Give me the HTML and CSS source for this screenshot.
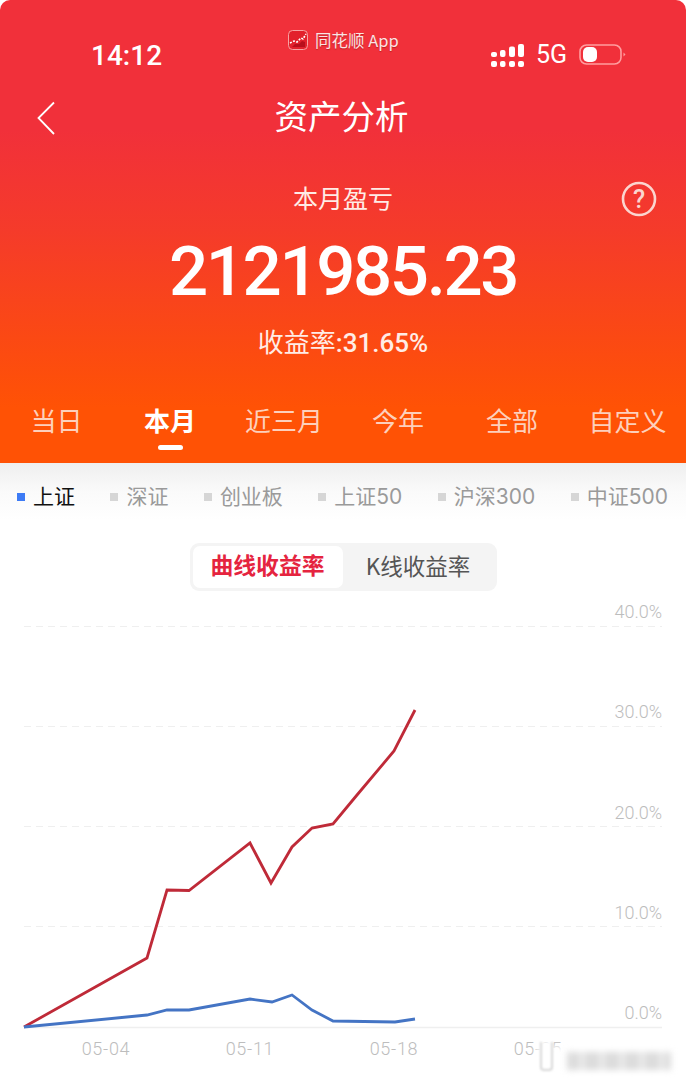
FILE: index.html
```html
<!DOCTYPE html>
<html lang="zh">
<head>
<meta charset="utf-8">
<title>资产分析</title>
<link rel="stylesheet" href="styles.css">
</head>
<body>
<div class="page">
  <header class="hero">
    <div class="status">
      <span class="time">14:12</span>
      <span class="carrier">
        <svg class="app-icon" width="20" height="20" viewBox="0 0 20 20"><rect x=".5" y=".5" width="19" height="19" rx="4" fill="#e2212c" stroke="#f7a3a3"/><path d="M2 13l4-2 3 1 4-4 2 1 3-5" fill="none" stroke="#fff" stroke-width="1.6" stroke-dasharray="2 1.4"/><path d="M4 17l3-3 4 0 3-3 3 1v5z" fill="#b80f1c"/></svg>
        同花顺 App
      </span>
      <span class="indicators">
        <svg width="33" height="23" viewBox="0 0 33 23" fill="#fff"><rect x="0" y="8" width="6" height="5" rx="2"/><rect x="0" y="17" width="6" height="6" rx="2"/><rect x="9" y="6" width="5.500" height="7" rx="2"/><rect x="9" y="17" width="5.500" height="6" rx="2"/><rect x="18" y="2.500" width="6" height="10.500" rx="2"/><rect x="18" y="17" width="6" height="6" rx="2"/><rect x="27" y="0" width="6" height="13" rx="2"/><rect x="27" y="17" width="6" height="6" rx="2"/></svg>
        <span class="net">5G</span>
        <svg width="47" height="22" viewBox="0 0 47 22"><rect x="1" y="1" width="41" height="19" rx="6.500" fill="none" stroke="#ff9d9f" stroke-width="1.600"/><rect x="4" y="3" width="14" height="15" rx="5" fill="#fff"/><path d="M44.500 8.500l2 2-2 2z" fill="#ff9d9f"/></svg>
      </span>
    </div>
    <div class="nav">
      <svg class="back" width="20" height="34" viewBox="0 0 20 34"><path d="M18 1.500L2.500 17 18 33" fill="none" stroke="#fff" stroke-width="1.800"/></svg>
      <h1 class="title">资产分析</h1>
    </div>
    <div class="summary">
      <div class="summary-label">本月盈亏</div>
      <svg class="help" width="36" height="36" viewBox="0 0 36 36"><circle cx="18" cy="18" r="16" fill="none" stroke="#fbd5cf" stroke-width="2.600"/><text x="18" y="27" text-anchor="middle" class="help-mark">?</text></svg>
      <div class="amount">2121985.23</div>
      <div class="rate">收益率<span class="rate-num">:31.65%</span></div>
    </div>
    <nav class="tabs">
      <span class="tab">当日</span>
      <span class="tab active">本月</span>
      <span class="tab">近三月</span>
      <span class="tab">今年</span>
      <span class="tab">全部</span>
      <span class="tab">自定义</span>
    </nav>
  </header>

  <div class="legend">
    <span class="item on"><i class="dot"></i>上证</span>
    <span class="item"><i class="dot"></i>深证</span>
    <span class="item"><i class="dot"></i>创业板</span>
    <span class="item"><i class="dot"></i>上证50</span>
    <span class="item"><i class="dot"></i>沪深300</span>
    <span class="item"><i class="dot"></i>中证500</span>
  </div>

  <div class="toggle-row">
    <div class="toggle">
      <span class="seg on">曲线收益率</span>
      <span class="seg">K线收益率</span>
    </div>
  </div>

  <svg class="chart" width="686" height="480" viewBox="0 600 686 480">
    <g class="grid">
      <line x1="24" y1="626.500" x2="662" y2="626.500"/>
      <line x1="24" y1="726.500" x2="662" y2="726.500"/>
      <line x1="24" y1="826.500" x2="662" y2="826.500"/>
      <line x1="24" y1="926.500" x2="662" y2="926.500"/>
    </g>
    <line class="base" x1="24" y1="1027.500" x2="662" y2="1027.500"/>
    <g class="y-labels">
      <text x="662" y="618">40.0%</text>
      <text x="662" y="718">30.0%</text>
      <text x="662" y="819">20.0%</text>
      <text x="662" y="919">10.0%</text>
      <text x="662" y="1019">0.0%</text>
    </g>
    <g class="x-labels">
      <text x="106" y="1055">05-04</text>
      <text x="250" y="1055">05-11</text>
      <text x="394" y="1055">05-18</text>
      <text x="538" y="1055">05-25</text>
    </g>
    <polyline class="red" points="24,1027 147,958 167,890 189,890.500 250,843 271,883 292,847 312,828 333,824 357,795 394,751 415,710"/>
    <polyline class="blue" points="24,1027 147,1015 167,1010 189,1010 250,999 272,1002 292,995 312,1010 333,1021 395,1022 415,1019"/>
  </svg>

  <div class="watermark" aria-hidden="true"><i class="wm-glow"></i><i class="wm-cup"></i><i class="wm-bars"></i></div>
</div>
</body>
</html>
```
FILE: styles.css
```css
* { box-sizing: border-box; }
html, body { margin: 0; padding: 0; background: #fff; }
body { width: 686px; height: 1080px; overflow: hidden; font-family: "Noto Sans CJK SC", "Noto Sans", sans-serif; }
.page { position: relative; width: 686px; height: 1080px; overflow: hidden; background: #fff; }

.hero {
  height: 463px;
  color: #fff;
  border-radius: 10px 10px 0 0;
  background: linear-gradient(180deg, #f1303a 0%, #f1303a 28%, #f53b2a 50%, #ff5205 88%, #ff5205 100%);
}

.status { position: relative; height: 80px; display: flex; justify-content: space-between; padding: 36px 60px 0 91px; }
.time { margin-top: 1px; font: 500 28px/38px Roboto, sans-serif; }
.carrier {
  position: absolute; left: 288px; top: 28px;
  display: flex; align-items: center; gap: 7px;
  font-size: 16.500px; line-height: 24px; color: #fbe3e3;
  text-shadow: 0 1px 1px rgba(120, 0, 0, .4);
}
.indicators { display: flex; align-items: center; gap: 12px; height: 40px; margin-top: -1px; }
.net { font: 400 25px/30px Roboto, sans-serif; }

.nav { position: relative; height: 74px; display: flex; align-items: center; justify-content: center; padding: 0 3px 5px 0; }
.back { position: absolute; left: 36px; top: 21px; }
.title { margin: 0; font-size: 33.500px; line-height: 46px; font-weight: 400; }

.summary { position: relative; height: 226px; display: flex; flex-direction: column; align-items: center; color: #fff; }
.summary-label { margin-top: 26px; font-size: 25px; line-height: 34px; color: #ffece6; }
.help { position: absolute; left: 621px; top: 27px; }
.help-mark { font: 500 25px Roboto, sans-serif; fill: #fbd5cf; }
.amount { margin-top: 20px; font: 500 69px/76px Roboto, sans-serif; letter-spacing: -2.400px; }
.rate { margin-top: 14px; font-size: 26px; line-height: 34px; color: #ffece6; }
.rate-num { font-family: Roboto, sans-serif; font-weight: 500; }

.tabs { display: grid; height: 83px; grid-template-columns: 113px 114px 114px 114px 114px 117px; }
.tab { padding-top: 22px; text-align: center; font-size: 26px; line-height: 36px; color: #fdd0bc; }
.tab.active { position: relative; color: #fff; font-weight: 700; }
.tab.active::after { content: ""; position: absolute; left: 45px; top: 65px; width: 25px; height: 5px; border-radius: 3px; background: #fff; }

.legend {
  height: 57px; display: flex; justify-content: space-between; align-items: center;
  padding: 10px 18px 0 17px;
  background: linear-gradient(180deg, #efefef 0%, #fafafa 50%, #fff 100%);
  font-family: Inter, "Noto Sans CJK SC", sans-serif;
}
.item { display: flex; align-items: center; gap: 8px; font-size: 21px; line-height: 30px; color: #9a9a9a; }
.item.on { color: #111; }
.dot { width: 8px; height: 8px; background: #d6d6d6; }
.item.on .dot { background: #3d7bf5; }

.toggle-row { display: flex; justify-content: center; padding-top: 23px; height: 80px; }
.toggle { display: flex; width: 307px; height: 48px; padding: 3px; border-radius: 9px; background: #f4f4f4; }
.seg { flex: 1; display: flex; align-items: center; justify-content: center; padding-bottom: 5px; font-size: 22.500px; color: #555; }
.seg.on { flex: 0 0 150px; border-radius: 7px; background: #fff; color: #e5243f; font-size: 22.800px; font-weight: 700; }

.chart { display: block; }
.grid line { stroke: #efefef; stroke-width: 1; stroke-dasharray: 7 5; }
.base { stroke: #efefef; stroke-width: 1.500; }
.y-labels text { font: 300 18px Roboto, sans-serif; fill: #bdbdbd; text-anchor: end; }
.x-labels text { font: 300 18px Roboto, sans-serif; fill: #bdbdbd; text-anchor: middle; letter-spacing: .7px; }
.red, .blue { fill: none; stroke-width: 2.800; stroke-linejoin: miter; }
.red { stroke: #bf2a38; }
.blue { stroke: #4474c4; }

.watermark { position: absolute; left: 0; top: 0; width: 686px; height: 1080px; pointer-events: none; }
.wm-glow, .wm-cup, .wm-bars { position: absolute; display: block; }
.wm-glow { left: 536px; top: 1046px; width: 146px; height: 28px; background: #fff; filter: blur(3px); }
.wm-cup { left: 540px; top: 1042px; width: 13px; height: 29px; border: 2px solid #d8d8d8; border-top: 0; border-radius: 0 0 4px 4px; background: #fff; filter: blur(.8px); }
.wm-bars {
  left: 567px; top: 1052px; width: 104px; height: 18px;
  background: repeating-linear-gradient(90deg, #dcdcdc 0, #dcdcdc 10px, #eeeeee 15px, #dcdcdc 20px);
  filter: blur(3px);
}
```
